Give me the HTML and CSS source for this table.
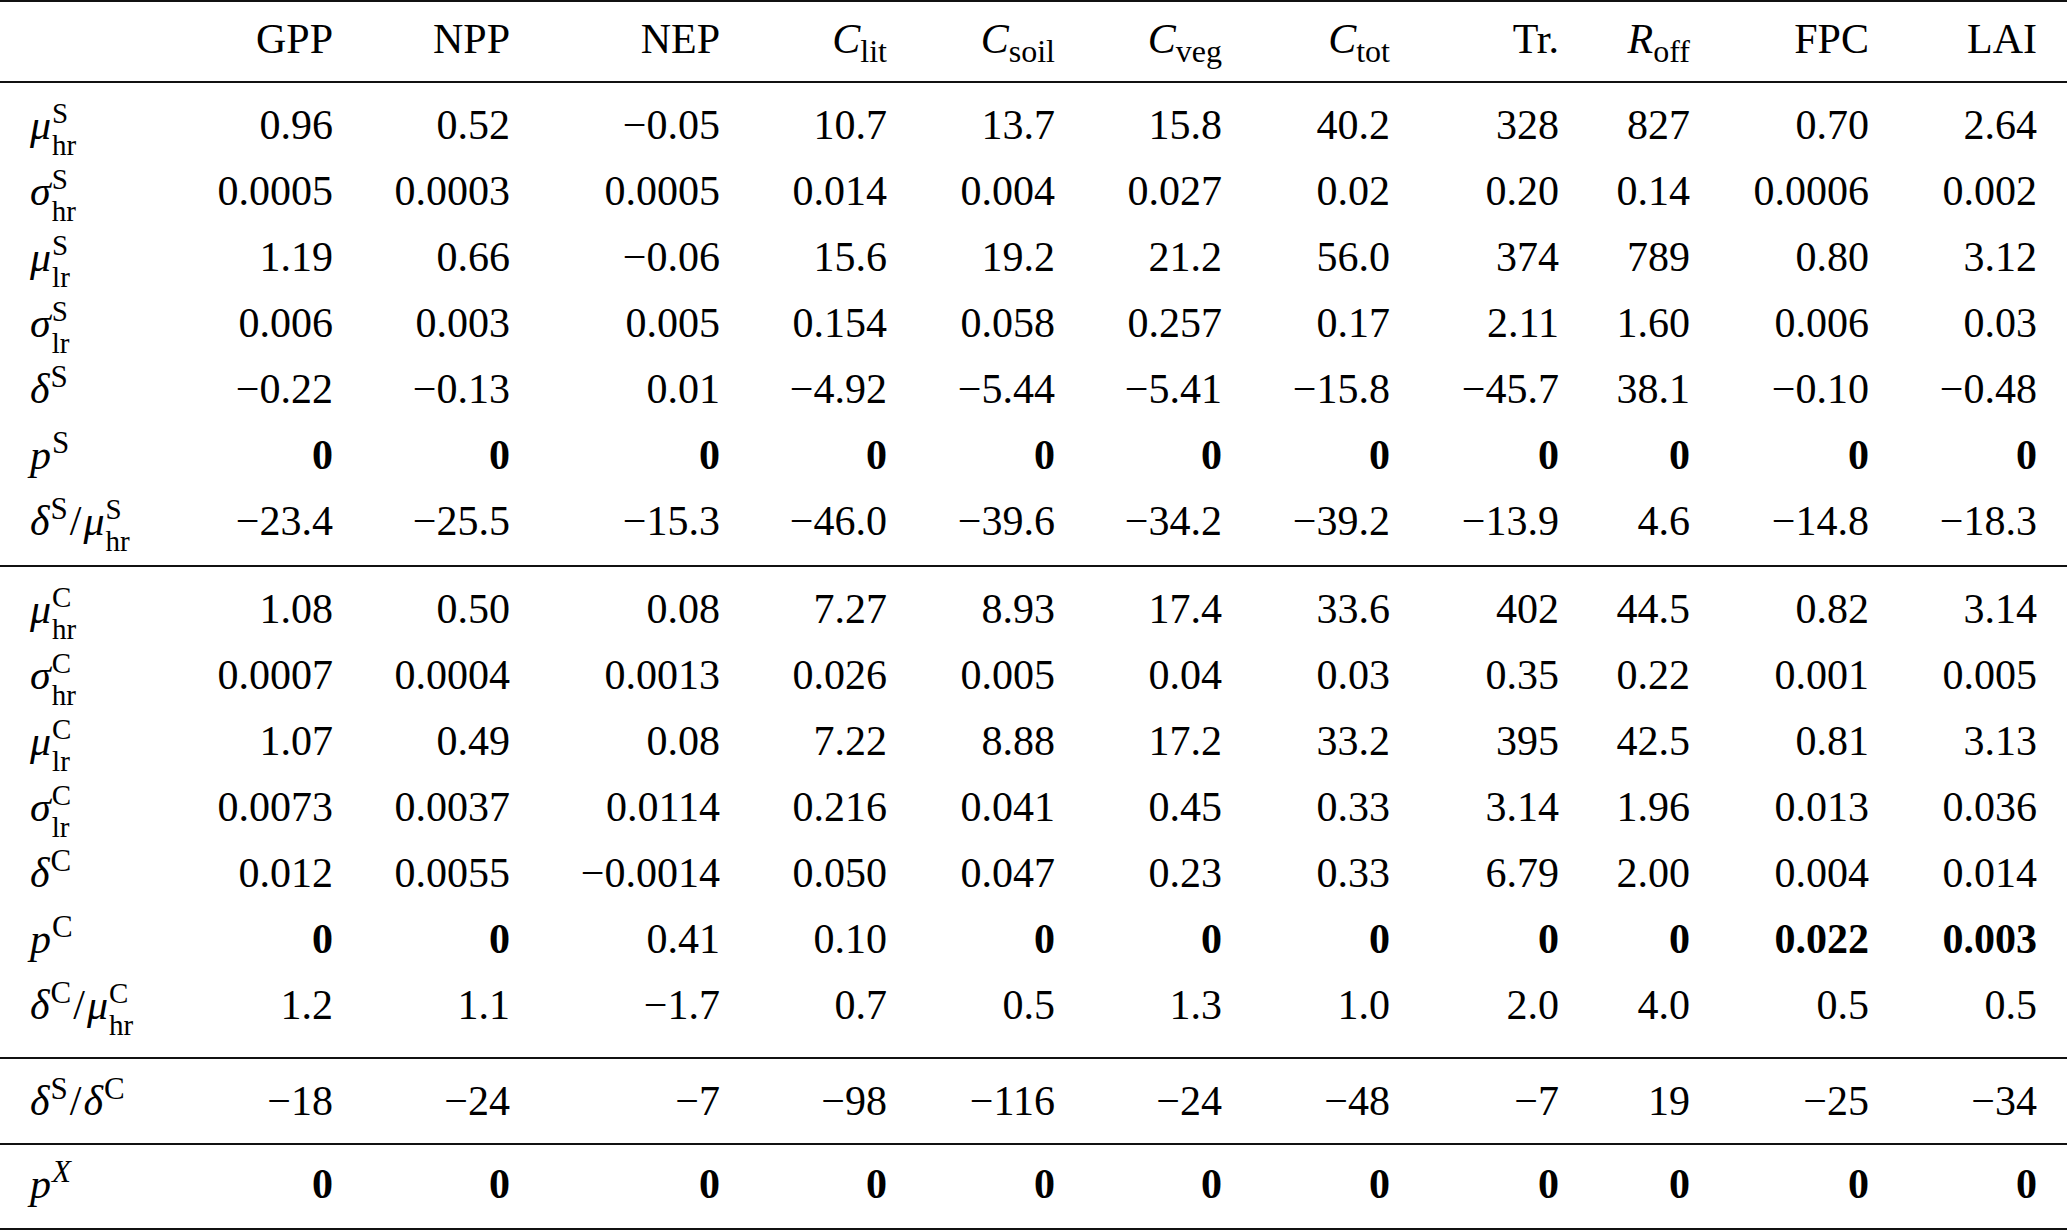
FILE: index.html
```html
<!DOCTYPE html>
<html lang="en">
<head>
<meta charset="utf-8">
<title>Table</title>
<link rel="stylesheet" href="styles.css">
</head>
<body>
<div class="tbl">
  <div class="sec head">
    <div class="row">
      <span></span>
      <span>GPP</span><span>NPP</span><span>NEP</span>
      <span><i>C</i><span class="lo">lit</span></span>
      <span><i>C</i><span class="lo">soil</span></span>
      <span><i>C</i><span class="lo">veg</span></span>
      <span><i>C</i><span class="lo">tot</span></span>
      <span>Tr.</span>
      <span><i>R</i><span class="lo">off</span></span>
      <span>FPC</span><span>LAI</span>
    </div>
  </div>

  <div class="sec s1">
    <div class="row">
      <span class="lab"><i>μ</i><span class="ss"><span>S</span><span>hr</span></span></span>
      <span>0.96</span><span>0.52</span><span>−0.05</span><span>10.7</span><span>13.7</span><span>15.8</span><span>40.2</span><span>328</span><span>827</span><span>0.70</span><span>2.64</span>
    </div>
    <div class="row">
      <span class="lab"><i>σ</i><span class="ss"><span>S</span><span>hr</span></span></span>
      <span>0.0005</span><span>0.0003</span><span>0.0005</span><span>0.014</span><span>0.004</span><span>0.027</span><span>0.02</span><span>0.20</span><span>0.14</span><span>0.0006</span><span>0.002</span>
    </div>
    <div class="row">
      <span class="lab"><i>μ</i><span class="ss"><span>S</span><span>lr</span></span></span>
      <span>1.19</span><span>0.66</span><span>−0.06</span><span>15.6</span><span>19.2</span><span>21.2</span><span>56.0</span><span>374</span><span>789</span><span>0.80</span><span>3.12</span>
    </div>
    <div class="row">
      <span class="lab"><i>σ</i><span class="ss"><span>S</span><span>lr</span></span></span>
      <span>0.006</span><span>0.003</span><span>0.005</span><span>0.154</span><span>0.058</span><span>0.257</span><span>0.17</span><span>2.11</span><span>1.60</span><span>0.006</span><span>0.03</span>
    </div>
    <div class="row">
      <span class="lab"><i>δ</i><span class="hi">S</span></span>
      <span>−0.22</span><span>−0.13</span><span>0.01</span><span>−4.92</span><span>−5.44</span><span>−5.41</span><span>−15.8</span><span>−45.7</span><span>38.1</span><span>−0.10</span><span>−0.48</span>
    </div>
    <div class="row">
      <span class="lab"><i>p</i><span class="hi">S</span></span>
      <b>0</b><b>0</b><b>0</b><b>0</b><b>0</b><b>0</b><b>0</b><b>0</b><b>0</b><b>0</b><b>0</b>
    </div>
    <div class="row">
      <span class="lab"><i>δ</i><span class="hi">S</span><span class="sl">/</span><i>μ</i><span class="ss"><span>S</span><span>hr</span></span></span>
      <span>−23.4</span><span>−25.5</span><span>−15.3</span><span>−46.0</span><span>−39.6</span><span>−34.2</span><span>−39.2</span><span>−13.9</span><span>4.6</span><span>−14.8</span><span>−18.3</span>
    </div>
  </div>

  <div class="sec s2">
    <div class="row">
      <span class="lab"><i>μ</i><span class="ss"><span>C</span><span>hr</span></span></span>
      <span>1.08</span><span>0.50</span><span>0.08</span><span>7.27</span><span>8.93</span><span>17.4</span><span>33.6</span><span>402</span><span>44.5</span><span>0.82</span><span>3.14</span>
    </div>
    <div class="row">
      <span class="lab"><i>σ</i><span class="ss"><span>C</span><span>hr</span></span></span>
      <span>0.0007</span><span>0.0004</span><span>0.0013</span><span>0.026</span><span>0.005</span><span>0.04</span><span>0.03</span><span>0.35</span><span>0.22</span><span>0.001</span><span>0.005</span>
    </div>
    <div class="row">
      <span class="lab"><i>μ</i><span class="ss"><span>C</span><span>lr</span></span></span>
      <span>1.07</span><span>0.49</span><span>0.08</span><span>7.22</span><span>8.88</span><span>17.2</span><span>33.2</span><span>395</span><span>42.5</span><span>0.81</span><span>3.13</span>
    </div>
    <div class="row">
      <span class="lab"><i>σ</i><span class="ss"><span>C</span><span>lr</span></span></span>
      <span>0.0073</span><span>0.0037</span><span>0.0114</span><span>0.216</span><span>0.041</span><span>0.45</span><span>0.33</span><span>3.14</span><span>1.96</span><span>0.013</span><span>0.036</span>
    </div>
    <div class="row">
      <span class="lab"><i>δ</i><span class="hi">C</span></span>
      <span>0.012</span><span>0.0055</span><span>−0.0014</span><span>0.050</span><span>0.047</span><span>0.23</span><span>0.33</span><span>6.79</span><span>2.00</span><span>0.004</span><span>0.014</span>
    </div>
    <div class="row">
      <span class="lab"><i>p</i><span class="hi">C</span></span>
      <b>0</b><b>0</b><span>0.41</span><span>0.10</span><b>0</b><b>0</b><b>0</b><b>0</b><b>0</b><b>0.022</b><b>0.003</b>
    </div>
    <div class="row">
      <span class="lab"><i>δ</i><span class="hi">C</span><span class="sl">/</span><i>μ</i><span class="ss"><span>C</span><span>hr</span></span></span>
      <span>1.2</span><span>1.1</span><span>−1.7</span><span>0.7</span><span>0.5</span><span>1.3</span><span>1.0</span><span>2.0</span><span>4.0</span><span>0.5</span><span>0.5</span>
    </div>
  </div>

  <div class="sec s3">
    <div class="row">
      <span class="lab"><i>δ</i><span class="hi">S</span><span class="sl">/</span><i>δ</i><span class="hi">C</span></span>
      <span>−18</span><span>−24</span><span>−7</span><span>−98</span><span>−116</span><span>−24</span><span>−48</span><span>−7</span><span>19</span><span>−25</span><span>−34</span>
    </div>
  </div>

  <div class="sec s4">
    <div class="row">
      <span class="lab"><i>p</i><i class="hi">X</i></span>
      <b>0</b><b>0</b><b>0</b><b>0</b><b>0</b><b>0</b><b>0</b><b>0</b><b>0</b><b>0</b><b>0</b>
    </div>
  </div>
</div>
</body>
</html>
```

FILE: styles.css
```css
html, body {
  margin: 0;
  padding: 0;
  background: #ffffff;
}

.tbl {
  width: 2067px;
  border-top: 2px solid #111;
  font-family: "Liberation Serif", "Times New Roman", serif;
  font-size: 42px;
  color: #000;
}

.sec {
  border-bottom: 2px solid #111;
}

.head { padding: 4px 0 9px; }
.s1 { padding: 9px 0 11px; }
.s2 { padding: 9px 0 19px; }
.s3 { padding: 9px 0 9px; }
.s4 { padding: 6px 0 11px; }

.row {
  display: grid;
  grid-template-columns: 150px 153px 177px 210px 167px 168px 167px 168px 169px 131px 179px 168px;
  padding: 0 30px;
  height: 66px;
  line-height: 66px;
  white-space: nowrap;
}

.row > * {
  display: block;
  text-align: right;
}

.row > .lab {
  text-align: left;
}

.row > b {
  font-weight: bold;
}

.lo {
  font-size: 32px;
  line-height: 1;
  vertical-align: -9px;
}

.hi {
  font-size: 31px;
  line-height: 1;
  vertical-align: 16px;
  margin-left: 1px;
}

.ss {
  display: inline-block;
  font-size: 29px;
  line-height: 32.4px;
  vertical-align: -16px;
  margin-left: 1px;
}

.ss > span {
  display: block;
}

.sl {
  padding: 0 2px;
}
```
